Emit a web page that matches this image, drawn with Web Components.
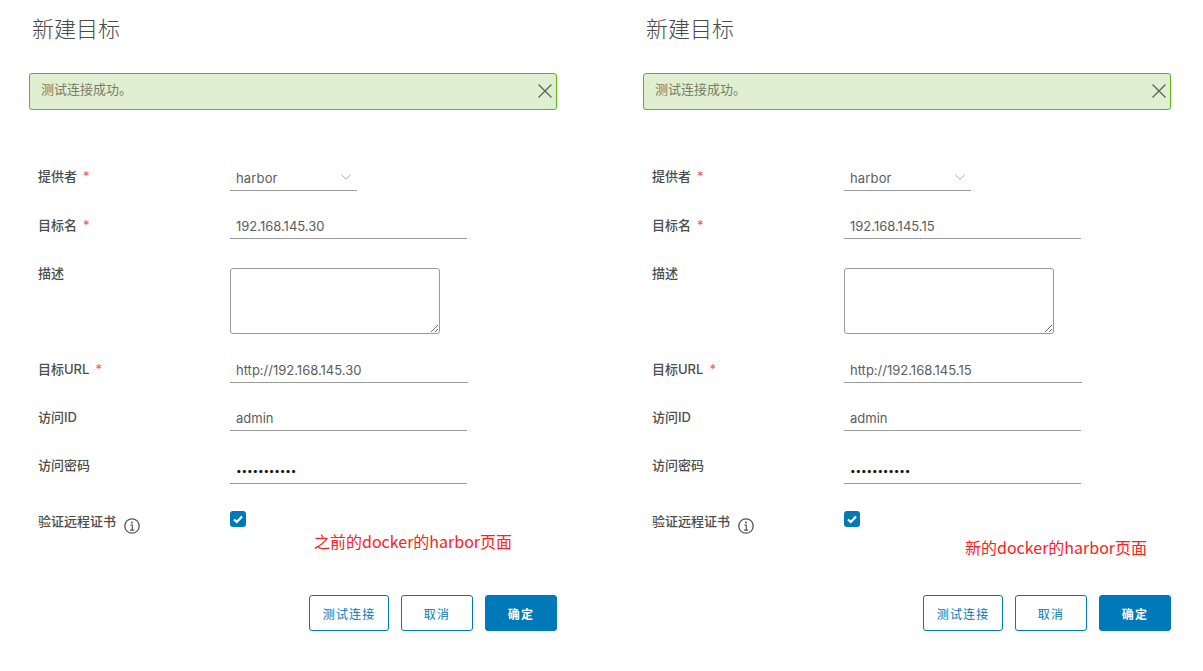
<!DOCTYPE html>
<html lang="zh">
<head>
<meta charset="utf-8">
<title>新建目标</title>
<style>
html,body{margin:0;background:#fff}
body{font-family:"Inter","Noto Sans CJK SC",sans-serif;font-size:13px;color:#565656}
main{display:flex;width:1203px;height:671px;overflow:hidden}
</style>
</head>
<body>
<main>
  <target-panel heading="新建目标" message="测试连接成功。" host-ip="192.168.145.30" note="之前的docker的harbor页面" note-x="314" note-y="529"></target-panel>
  <target-panel heading="新建目标" message="测试连接成功。" host-ip="192.168.145.15" note="新的docker的harbor页面" note-x="351" note-y="535"></target-panel>
</main>
<script>
class AlertBar extends HTMLElement {
    connectedCallback() {
        this.attachShadow({ mode: 'open' });
        this.shadowRoot.innerHTML = `
            <style>
                :host{display:flex;align-items:center;justify-content:space-between;box-sizing:border-box;height:37px;padding:0 3px 0 11px;background:#dff0d0;border:1px solid #60b515;border-radius:3px;color:#7a7a68;font-size:13px}
                span{position:relative;top:-3px}
                svg{display:block;margin-top:-1px}
            </style>
            <span><slot></slot></span>
            <svg width="16" height="16" viewBox="0 0 16 16" fill="none" stroke="#5f5f5f" stroke-width="1.3"><path d="M1.5 1.5l13 13M14.500 1.500l-13 13"/></svg>
        `;
    }
}
customElements.define('alert-bar', AlertBar);

class FormRow extends HTMLElement {
    connectedCallback() {
        const label = this.getAttribute('label');
        const star = this.hasAttribute('required') ? '<i>*</i>' : '';
        this.attachShadow({ mode: 'open' });
        this.shadowRoot.innerHTML = `
            <style>
                :host{display:grid;grid-template-columns:201px 1fr;height:var(--row,48px);align-items:start}
                .label{display:flex;align-items:flex-start;height:20px;line-height:20px;padding-left:9px;font-size:13px;font-weight:500;color:#4d4d4d;white-space:nowrap}
                i{font-style:normal;font-weight:400;color:#e0644c;margin-left:6px}
            </style>
            <div class="label">${label}${star}<slot name="extra"></slot></div>
            <div><slot></slot></div>
        `;
    }
}
customElements.define('form-row', FormRow);

class TextField extends HTMLElement {
    connectedCallback() {
        this.attachShadow({ mode: 'open' });
        this.shadowRoot.innerHTML = `
            <style>
                :host{display:flex;align-items:flex-end;box-sizing:border-box;width:var(--w,237px);height:var(--h,24px);padding:0 6px 3px;border-bottom:1px solid #9a9a9a;font-size:13px;line-height:18px;color:#5c5c5c;white-space:nowrap}
                :host([secret]){color:#111;font-size:10px;letter-spacing:-.15px;padding-bottom:4px}
            </style>
            <slot></slot>
        `;
    }
}
customElements.define('text-field', TextField);

class SelectField extends HTMLElement {
    connectedCallback() {
        this.attachShadow({ mode: 'open' });
        this.shadowRoot.innerHTML = `
            <style>
                :host{display:flex;align-items:flex-end;justify-content:space-between;box-sizing:border-box;width:127px;height:25px;padding:0 6px 3px 6px;border-bottom:1px solid #9a9a9a;font-size:13px;line-height:18px;color:#5c5c5c;letter-spacing:.15px}
                svg{align-self:flex-start;margin-top:8px}
            </style>
            <span><slot></slot></span>
            <svg width="10" height="6" viewBox="0 0 10 6" fill="none" stroke="#a8a8a8"><path d="M.5.800l4.500 4.400 4.500-4.400"/></svg>
        `;
    }
}
customElements.define('select-field', SelectField);

class AreaField extends HTMLElement {
    connectedCallback() {
        this.attachShadow({ mode: 'open' });
        this.shadowRoot.innerHTML = `
            <style>
                :host{display:block;margin-top:5px}
                textarea{display:block;box-sizing:border-box;width:210px;height:66px;margin:0;border:1px solid #9a9a9a;border-radius:3px;background:#fff;outline:0}
            </style>
            <textarea></textarea>
        `;
    }
}
customElements.define('area-field', AreaField);

class CheckField extends HTMLElement {
    connectedCallback() {
        this.attachShadow({ mode: 'open' });
        this.shadowRoot.innerHTML = `
            <style>
                :host{display:flex;align-items:center;justify-content:center;width:16px;height:16px;border-radius:3px;background:#0079b8}
                svg{display:block}
            </style>
            <svg width="10" height="9" viewBox="0 0 10 9" fill="none" stroke="#fff" stroke-width="2.300"><path d="M1 4.500l2.800 2.500L9 1.500"/></svg>
        `;
    }
}
customElements.define('check-field', CheckField);

class InfoIcon extends HTMLElement {
    connectedCallback() {
        this.attachShadow({ mode: 'open' });
        this.shadowRoot.innerHTML = `
            <style>
                :host{display:block;width:16px;height:16px;margin:7px 0 0 8px}
                svg{display:block}
            </style>
            <svg width="16" height="16" viewBox="0 0 16 16" fill="none" stroke="#565656">
                <circle cx="8" cy="8" r="7.200" stroke-width="1.300"/>
                <path d="M6.300 7h2v5M6 12.200h4.200" stroke-width="1.200"/>
                <circle cx="7.900" cy="4.500" r="1" fill="#565656" stroke="none"/>
            </svg>
        `;
    }
}
customElements.define('info-icon', InfoIcon);

class UiButton extends HTMLElement {
    connectedCallback() {
        this.attachShadow({ mode: 'open' });
        this.shadowRoot.innerHTML = `
            <style>
                :host{display:flex;align-items:center;justify-content:center;box-sizing:border-box;min-width:72px;height:36px;padding:0 12.500px;border:1px solid #0079b8;border-radius:3px;background:#fff;color:#0079b8;font-size:12px;font-weight:400;letter-spacing:.1em;white-space:nowrap}
                :host([primary]){background:#0079b8;color:#fff;font-weight:600}
            </style>
            <slot></slot>
        `;
    }
}
customElements.define('ui-button', UiButton);

class TargetPanel extends HTMLElement {
    connectedCallback() {
        const ip = this.getAttribute('host-ip');
        this.attachShadow({ mode: 'open' });
        this.shadowRoot.innerHTML = `
            <style>
                :host{display:block;position:relative;box-sizing:border-box;flex:0 0 614px;width:614px;padding:0 57px 0 29px}
                h3{margin:0;padding:15px 0 0 3px;height:73px;box-sizing:border-box;font-size:22px;line-height:28px;font-weight:300;color:#4a4a4a}
                .form{padding-top:56px}
                .foot{display:flex;justify-content:flex-end;gap:12px}
                .note{position:absolute;white-space:nowrap;font-family:"Noto Sans CJK SC",sans-serif;font-size:16px;line-height:24px;color:#ff2020;left:${this.getAttribute('note-x')}px;top:${this.getAttribute('note-y')}px}
            </style>
            <h3>${this.getAttribute('heading')}</h3>
            <alert-bar>${this.getAttribute('message')}</alert-bar>
            <div class="form">
                <form-row label="提供者" required style="--row:49px"><select-field>harbor</select-field></form-row>
                <form-row label="目标名" required><text-field>${ip}</text-field></form-row>
                <form-row label="描述" style="--row:96px"><area-field></area-field></form-row>
                <form-row label="目标URL" required><text-field style="--w:238px">http://${ip}</text-field></form-row>
                <form-row label="访问ID"><text-field>admin</text-field></form-row>
                <form-row label="访问密码" style="--row:56px"><text-field secret style="--h:29px">•••••••••••</text-field></form-row>
                <form-row label="验证远程证书" style="--row:84px"><info-icon slot="extra"></info-icon><check-field></check-field></form-row>
            </div>
            <div class="foot">
                <ui-button>测试连接</ui-button>
                <ui-button>取消</ui-button>
                <ui-button primary>确定</ui-button>
            </div>
            <div class="note">${this.getAttribute('note')}</div>
        `;
    }
}
customElements.define('target-panel', TargetPanel);
</script>
</body>
</html>
